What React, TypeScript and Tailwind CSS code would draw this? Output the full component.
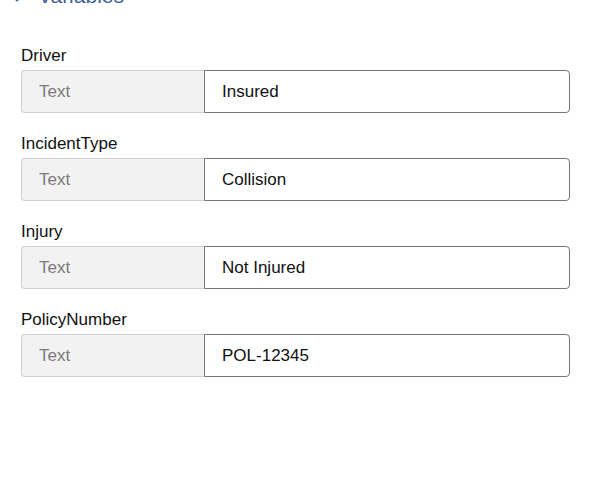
import { ChevronDown } from "lucide-react";

const fields = [
  { name: "Driver", value: "Insured" },
  { name: "IncidentType", value: "Collision" },
  { name: "Injury", value: "Not Injured" },
  { name: "PolicyNumber", value: "POL-12345" },
];

function VariableField({ name, value }: { name: string; value: string }) {
  return (
    <div className="mb-[21px]">
      <label className="block text-[17px] leading-[20px] text-[#111] mb-[4px]">{name}</label>
      <div className="flex h-[43px]">
        <div className="w-[183px] flex items-center pl-[17px] bg-[#f2f2f2] border border-[#cfcfcf] border-r-0 rounded-l-[4px] text-[17px] text-[#7a7a7a]">
          Text
        </div>
        <input
          readOnly
          value={value}
          className="flex-1 min-w-0 pl-[17px] bg-white border border-[#767676] rounded-r-[4px] text-[17px] text-[#111] outline-none"
        />
      </div>
    </div>
  );
}

export default function App() {
  return (
    <div className="w-[598px] h-[501px] bg-white overflow-hidden font-['Liberation_Sans',Arial,sans-serif]">
      <div className="flex items-center h-[28px] -mt-[18px] pl-[10px] text-[#3b5f9a]">
        <ChevronDown className="w-[14px] h-[14px] mt-[6px]" strokeWidth={2.5} />
        <span className="ml-[14px] text-[21px] leading-[28px]">Variables</span>
      </div>
      <div className="mt-[36px] pl-[21px] w-[570px]">
        {fields.map((f) => (
          <VariableField key={f.name} name={f.name} value={f.value} />
        ))}
      </div>
    </div>
  );
}
